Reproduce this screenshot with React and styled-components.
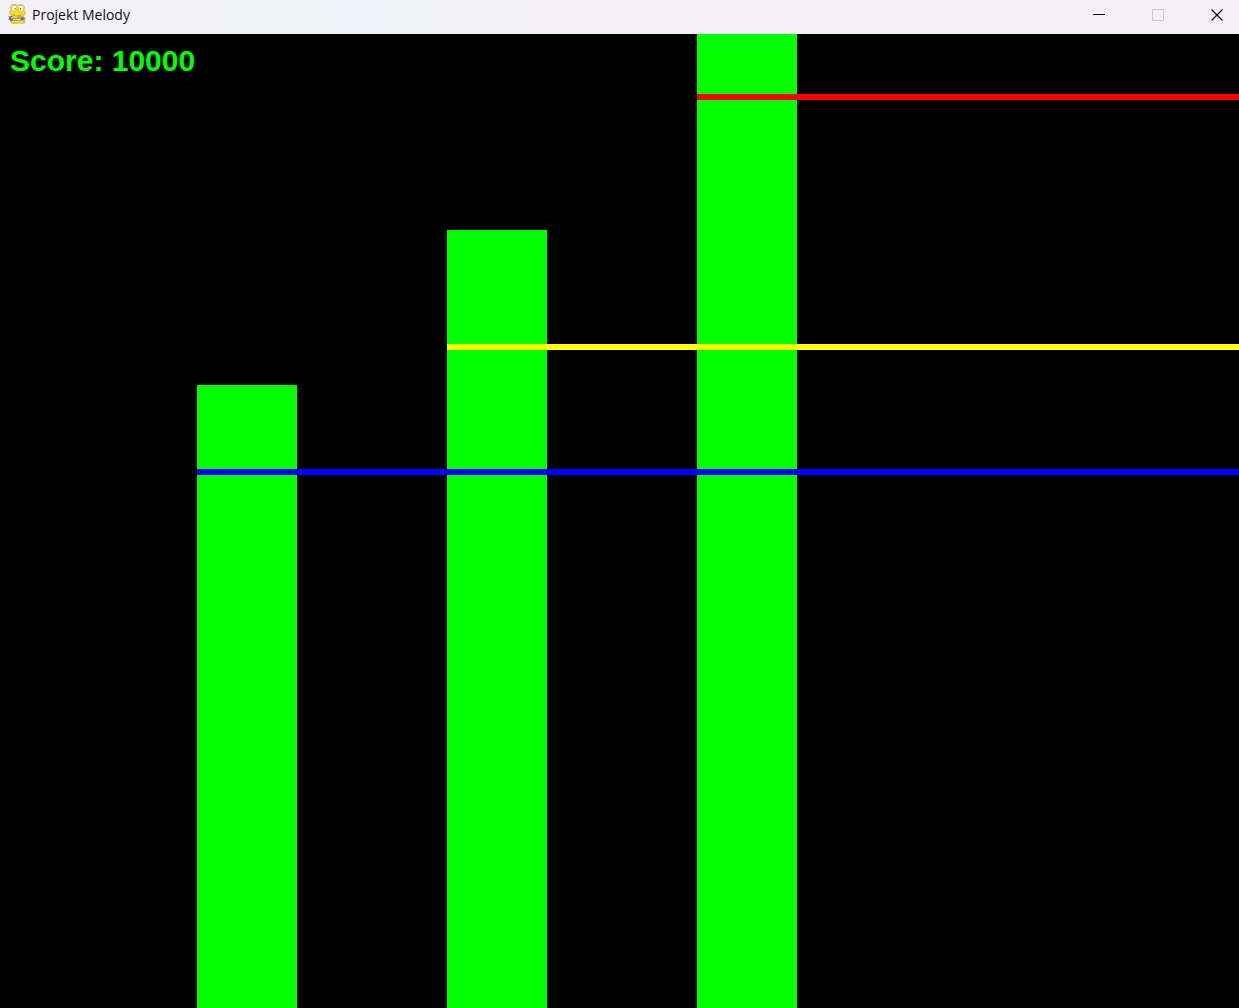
import React from "react";
import styled, { createGlobalStyle } from "styled-components";

const GlobalStyle = createGlobalStyle`
  *, *::before, *::after { box-sizing: border-box; }
  body { margin: 0; background: #000; }
`;

const Window = styled.div`
  display: flex;
  flex-direction: column;
  min-height: 100vh;
  background: #000;
`;

const TitleBar = styled.header`
  display: flex;
  align-items: stretch;
  height: 34px;
  padding-left: 8px;
  background: linear-gradient(90deg, #f3f0f6 0%, #f0f3f7 30%, #f3f0f6 45%, #f5f0f6 75%, #f5f0f6 100%);
`;

const Caption = styled.div`
  display: flex;
  align-items: center;
  gap: 6px;
  flex: 1;
  height: 28px;
`;

const Title = styled.h1`
  margin: 0;
  padding-top: 2px;
  font: 400 14px/20px "Open Sans", "Noto Sans", sans-serif;
  color: #111;
`;

const Controls = styled.div`
  display: flex;
`;

const ControlButton = styled.button`
  display: flex;
  align-items: center;
  justify-content: center;
  width: 59px;
  height: 30px;
  padding: 0 0 0 15px;
  border: 0;
  background: transparent;
  color: ${(p) => (p.disabled ? "#c8c4c9" : "#0d0b12")};
`;

const Stage = styled.main`
  position: relative;
  display: flex;
  flex: 1;
  gap: 150px;
  padding-left: 197px;
  overflow: hidden;
  background: #000;
`;

const Score = styled.p`
  position: absolute;
  top: 10px;
  left: 10px;
  margin: 0;
  font: 700 30px/34px "Liberation Sans", Arial, sans-serif;
  color: #00ff00;
  white-space: nowrap;
`;

const Column = styled.div`
  position: relative;
  display: flex;
  flex: none;
  width: 100px;
  padding-top: ${(p) => p.$top}px;
`;

const Bar = styled.div`
  flex: 1;
  background: #00ff00;
`;

const Threshold = styled.div`
  position: absolute;
  z-index: 1;
  top: ${(p) => p.$level}px;
  left: 0;
  width: 100vw;
  height: 6px;
  background: ${(p) => p.$color};
`;

const columns = [
  { id: "low", top: 351, level: 435, color: "#0000ff" },
  { id: "mid", top: 196, level: 310, color: "#ffff00" },
  { id: "high", top: 0, level: 60, color: "#ff0000" },
];

function SnakeIcon() {
  return (
    <svg width="18" height="20" viewBox="0 0 18 20" aria-hidden="true">
      <path
        d="M4 0.500 8 0.500 9.500 1.500 12 0.500 15 1 16.500 3 16 6 17.500 8.500 16.500 11 14 12.500 17 16 17 18.500 14 19.500 11 18.500 9 19.800 4 19.800 3 18 5 16 4.500 13 5.500 12 2.500 10.500 1.500 8 3 6 2.500 2.500Z"
        fill="#f7df12"
        stroke="#a89422"
        strokeWidth="0.500"
      />
      <path d="M4 10 8 11.500 14 10.500 12 12.500 6 12.300Z" fill="#c4a512" />
      <path d="M4.500 1.500h3l1 2-0.500 3-2 1-2-1.500-0.500-2.500Z" fill="#ffffff" stroke="#a39a68" strokeWidth="0.400" />
      <path d="M11.500 1.500h3l1 2-0.500 3-2 1-2-1.500-0.500-2.500Z" fill="#ffffff" stroke="#a39a68" strokeWidth="0.400" />
      <circle cx="7" cy="4.700" r="0.700" fill="#5a5a52" />
      <circle cx="12.500" cy="4.700" r="0.700" fill="#5a5a52" />
      <path d="M0 12 2 12.500 4 11.500 5 14 8 14.500 7 16.500 4 16.500 3 18 1.500 16 0 15 1.500 14Z" fill="#6f6f67" />
      <path d="M3 14h3M5 15.500h3" stroke="#d8d8d2" />
      <path d="M7 14 11 12.500 16 12.500 17.500 15 16 16.500 12 16.500 8 17Z" fill="#9b9b98" />
      <path d="M8 15.500h4" stroke="#d6d5d3" />
      <circle cx="14.300" cy="14.800" r="1.200" fill="#c23a48" />
    </svg>
  );
}

function MinimizeIcon() {
  return (
    <svg width="12" height="12" viewBox="0 0 12 12" aria-hidden="true">
      <path d="M0 5.500h12" stroke="currentColor" />
    </svg>
  );
}

function MaximizeIcon() {
  return (
    <svg width="12" height="12" viewBox="0 0 12 12" aria-hidden="true">
      <rect x="0.500" y="0.500" width="11" height="11" rx="0.500" fill="none" stroke="currentColor" />
    </svg>
  );
}

function CloseIcon() {
  return (
    <svg width="12" height="12" viewBox="0 0 12 12" aria-hidden="true">
      <path d="m0.500 0.500 11 11m0-11-11 11" stroke="currentColor" strokeWidth="1.200" />
    </svg>
  );
}

export default function App() {
  return (
    <Window>
      <GlobalStyle />
      <TitleBar>
        <Caption>
          <SnakeIcon />
          <Title>Projekt Melody</Title>
        </Caption>
        <Controls>
          <ControlButton type="button" aria-label="Minimize"><MinimizeIcon /></ControlButton>
          <ControlButton type="button" aria-label="Maximize" disabled><MaximizeIcon /></ControlButton>
          <ControlButton type="button" aria-label="Close"><CloseIcon /></ControlButton>
        </Controls>
      </TitleBar>
      <Stage>
        {columns.map((c) => (
          <Column key={c.id} $top={c.top}>
            <Bar />
            <Threshold $level={c.level} $color={c.color} />
          </Column>
        ))}
        <Score>Score: 10000</Score>
      </Stage>
    </Window>
  );
}
